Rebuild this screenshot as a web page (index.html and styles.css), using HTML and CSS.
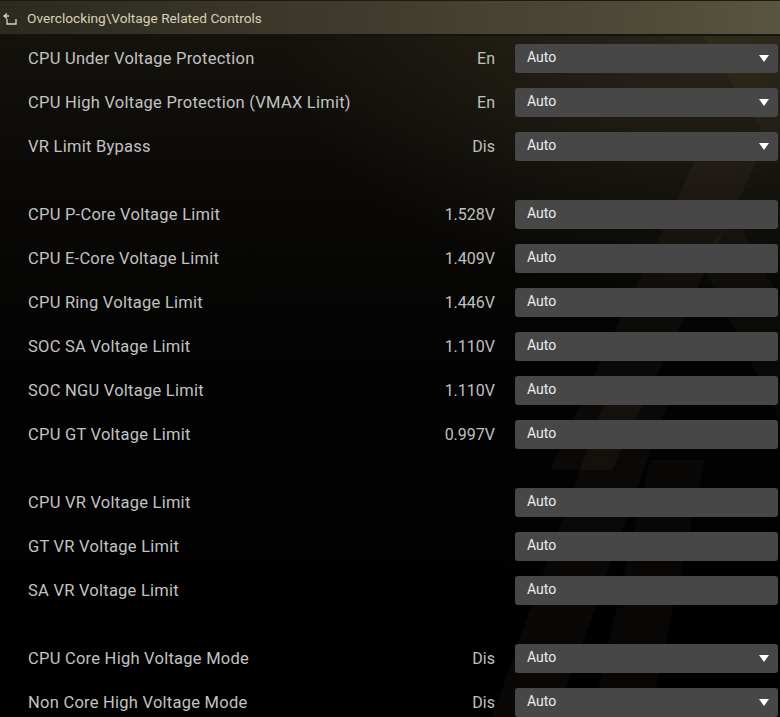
FILE: index.html
```html
<!DOCTYPE html>
<html lang="en">
<head>
  <meta charset="UTF-8">
  <title>Voltage Related Controls</title>
  <link rel="stylesheet" href="styles.css">
</head>
<body>
  <div class="screen">
    <!-- faint diagonal stripes behind the list -->
    <svg class="backdrop" width="780" height="717" viewBox="0 0 780 717">
      <polygon points="700,150 762,150 612,470 550,470" fill="rgba(140,120,80,0.07)"/>
      <polygon points="735,215 780,300 780,420 700,260" fill="rgba(140,120,80,0.06)"/>
      <polygon points="612,380 676,380 556,717 492,717" fill="rgba(140,120,80,0.07)"/>
      <polygon points="650,460 705,460 650,717 592,717" fill="rgba(140,120,80,0.06)"/>
      <polygon points="680,0 780,0 780,160" fill="rgba(150,130,90,0.05)"/>
    </svg>

    <header class="crumb">
      <svg class="back" width="16" height="14" viewBox="0 0 16 14">
        <path d="M5 1.5 L2 4 L5 6.5 M2 4 H7 M5 7 V12 H14 V7" fill="none" stroke="#d8d1b8" stroke-width="1.3"/>
      </svg>
      <span>Overclocking\Voltage Related Controls</span>
    </header>

    <main class="items">
      <div class="item">
        <span class="label">CPU Under Voltage Protection</span>
        <span class="value">En</span>
        <div class="field select">Auto</div>
      </div>
      <div class="item">
        <span class="label">CPU High Voltage Protection (VMAX Limit)</span>
        <span class="value">En</span>
        <div class="field select">Auto</div>
      </div>
      <div class="item">
        <span class="label">VR Limit Bypass</span>
        <span class="value">Dis</span>
        <div class="field select">Auto</div>
      </div>

      <div class="spacer"></div>

      <div class="item">
        <span class="label">CPU P-Core Voltage Limit</span>
        <span class="value">1.528V</span>
        <div class="field">Auto</div>
      </div>
      <div class="item">
        <span class="label">CPU E-Core Voltage Limit</span>
        <span class="value">1.409V</span>
        <div class="field">Auto</div>
      </div>
      <div class="item">
        <span class="label">CPU Ring Voltage Limit</span>
        <span class="value">1.446V</span>
        <div class="field">Auto</div>
      </div>
      <div class="item">
        <span class="label">SOC SA Voltage Limit</span>
        <span class="value">1.110V</span>
        <div class="field">Auto</div>
      </div>
      <div class="item">
        <span class="label">SOC NGU Voltage Limit</span>
        <span class="value">1.110V</span>
        <div class="field">Auto</div>
      </div>
      <div class="item">
        <span class="label">CPU GT Voltage Limit</span>
        <span class="value">0.997V</span>
        <div class="field">Auto</div>
      </div>

      <div class="spacer"></div>

      <div class="item">
        <span class="label">CPU VR Voltage Limit</span>
        <span class="value"></span>
        <div class="field">Auto</div>
      </div>
      <div class="item">
        <span class="label">GT VR Voltage Limit</span>
        <span class="value"></span>
        <div class="field">Auto</div>
      </div>
      <div class="item">
        <span class="label">SA VR Voltage Limit</span>
        <span class="value"></span>
        <div class="field">Auto</div>
      </div>

      <div class="spacer"></div>

      <div class="item">
        <span class="label">CPU Core High Voltage Mode</span>
        <span class="value">Dis</span>
        <div class="field select">Auto</div>
      </div>
      <div class="item">
        <span class="label">Non Core High Voltage Mode</span>
        <span class="value">Dis</span>
        <div class="field select">Auto</div>
      </div>
    </main>
  </div>
</body>
</html>
```

FILE: styles.css
```css
/* General */
body {
  margin: 0;
  background-color: #000;
  font-family: 'Roboto', 'Liberation Sans', sans-serif;
}

.screen {
  position: relative;
  width: 780px;
  height: 717px;
  overflow: hidden;
  background:
    radial-gradient(ellipse 420px 260px at 700px 40px, rgba(70, 62, 42, 0.45), rgba(0, 0, 0, 0) 100%),
    linear-gradient(180deg, #17140e 0px, #0a0907 180px, #030303 360px, #000 100%);
}

.backdrop {
  position: absolute;
  left: 0;
  top: 0;
}

/* Breadcrumb bar */
.crumb {
  position: relative;
  display: flex;
  align-items: center;
  gap: 9px;
  height: 33px;
  padding-left: 2px;
  border-top: 1px solid #1d1a14;
  border-bottom: 2px solid #15130e;
  background: linear-gradient(90deg, #2c2920 0%, #3f3b2c 45%, #514c38 85%, #5a5540 100%);
  color: #d8d1b8;
  font-size: 13.7px;
}

.crumb .back {
  margin-top: 2px;
}

/* Setting rows */
.items {
  position: relative;
  display: flex;
  flex-direction: column;
}

.item {
  display: grid;
  grid-template-columns: 1fr auto 263px;
  align-items: center;
  height: 44px;
  padding: 0 2px 0 28px;
}

.spacer {
  height: 24px;
}

.label {
  color: #c2c2c2;
  font-size: 16.5px;
  letter-spacing: 0.25px;
}

.value {
  margin-right: 20px;
  color: #c0c0c0;
  font-size: 16px;
  text-align: right;
}

.field {
  position: relative;
  box-sizing: border-box;
  height: 29px;
  padding: 0 0 3px 12px;
  border-radius: 3px;
  background-color: #474747;
  color: #ededed;
  font-size: 14px;
  line-height: 26px;
}

.field.select::after {
  content: "";
  position: absolute;
  right: 9px;
  top: 11px;
  border-left: 5.5px solid transparent;
  border-right: 5.5px solid transparent;
  border-top: 7px solid #fff;
}
```
